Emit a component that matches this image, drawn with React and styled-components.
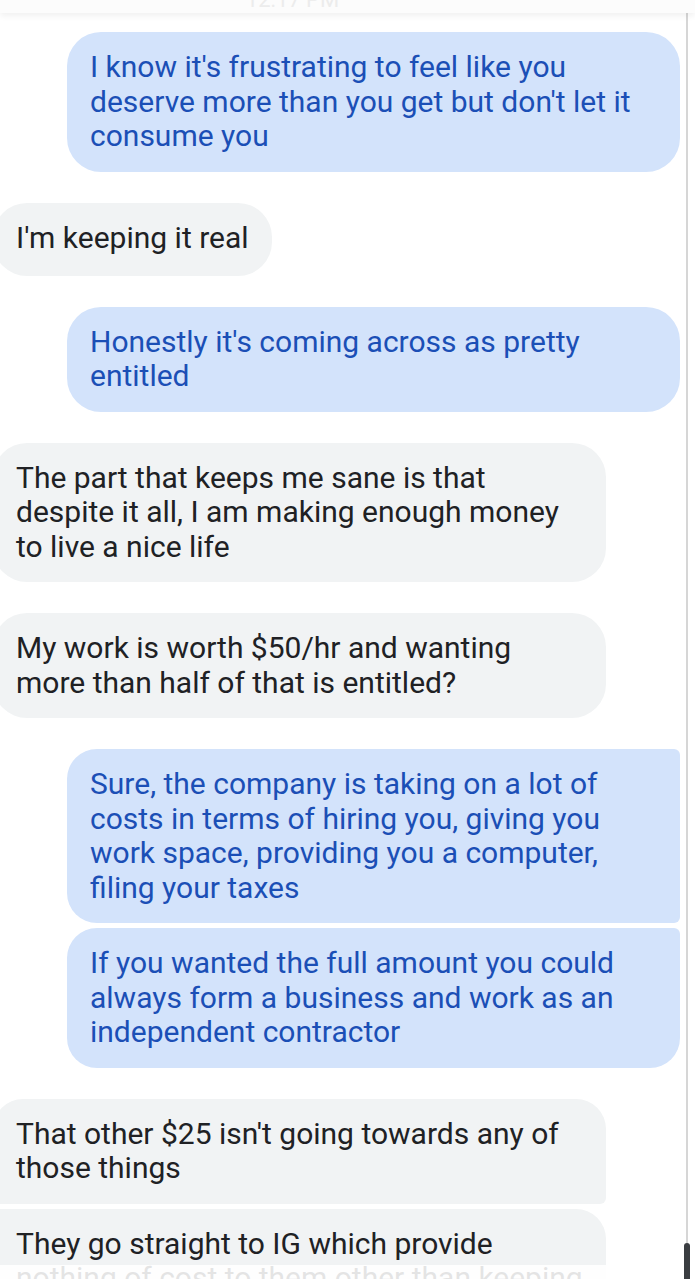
import React from 'react';
import styled, { createGlobalStyle } from 'styled-components';

const GlobalStyle = createGlobalStyle`
    html, body {
        margin: 0;
        padding: 0;
        background: #ffffff;
    }
    body {
        font-family: Roboto, "Noto Sans", sans-serif;
    }
`;

const Screen = styled.div`
    position: relative;
    width: 695px;
    height: 1279px;
    overflow: hidden;
    background: #ffffff;
`;

const Header = styled.div`
    position: relative;
    z-index: 2;
    height: 13px;
    background: #fcfcfc;
    box-shadow: 0 3px 6px rgba(0, 0, 0, 0.06);
    display: flex;
    justify-content: center;
    align-items: flex-end;
    padding-right: 110px;
    overflow: hidden;
`;

const Stamp = styled.span`
    font-size: 22px;
    line-height: 22px;
    margin-bottom: 2px;
    color: #ececec;
`;

const Thread = styled.div`
    display: flex;
    flex-direction: column;
    padding: 19px 15px 0 0;
`;

const Bubble = styled.div`
    box-sizing: border-box;
    max-width: 613px;
    width: fit-content;
    min-height: 73px;
    padding: 18px 23px;
    font-size: 30px;
    line-height: 34.5px;
    margin-top: ${(p) => (p.$grouped ? '5px' : '31px')};
    align-self: ${(p) => (p.$sent ? 'flex-end' : 'flex-start')};
    margin-left: ${(p) => (p.$sent ? '0' : '-7px')};
    background: ${(p) => (p.$sent ? '#d3e3fb' : '#f1f3f4')};
    color: ${(p) => (p.$sent ? '#1b4fb6' : '#202124')};
    border-radius: ${(p) => p.$radius || '34px'};

    &:first-child {
        margin-top: 0;
    }
`;

const Fade = styled.div`
    position: absolute;
    left: 0;
    right: 0;
    bottom: 0;
    height: 14px;
    background: rgba(255, 255, 255, 0.88);
`;

const Track = styled.div`
    position: absolute;
    top: 13px;
    bottom: 0;
    right: 7px;
    width: 2px;
    background: #d6d6d6;
`;

const Thumb = styled.div`
    position: absolute;
    bottom: 0;
    right: 5px;
    width: 6px;
    height: 36px;
    border-radius: 3px 3px 0 0;
    background: #3a3d41;
`;

const messages = [
    { sent: true, text: "I know it's frustrating to feel like you deserve more than you get but don't let it consume you" },
    { sent: false, text: "I'm keeping it real" },
    { sent: true, text: "Honestly it's coming across as pretty entitled" },
    { sent: false, text: 'The part that keeps me sane is that despite it all, I am making enough money to live a nice life' },
    { sent: false, text: 'My work is worth $50/hr and wanting more than half of that is entitled?' },
    { sent: true, radius: '30px 6px 6px 30px', text: 'Sure, the company is taking on a lot of costs in terms of hiring you, giving you work space, providing you a computer, filing your taxes' },
    { sent: true, grouped: true, radius: '30px 6px 30px 30px', text: 'If you wanted the full amount you could always form a business and work as an independent contractor' },
    { sent: false, radius: '30px 30px 6px 6px', text: "That other $25 isn't going towards any of those things" },
    { sent: false, grouped: true, radius: '6px 30px 30px 30px', text: 'They go straight to IG which provide nothing of cost to them other than keeping the lights on for everyone' },
];

export default function App() {
    return (
        <Screen>
            <GlobalStyle />
            <Header>
                <Stamp>12:17 PM</Stamp>
            </Header>
            <Thread>
                {messages.map((m, i) => (
                    <Bubble key={i} $sent={m.sent} $grouped={m.grouped} $radius={m.radius}>
                        {m.text}
                    </Bubble>
                ))}
            </Thread>
            <Fade />
            <Track />
            <Thumb />
        </Screen>
    );
}
